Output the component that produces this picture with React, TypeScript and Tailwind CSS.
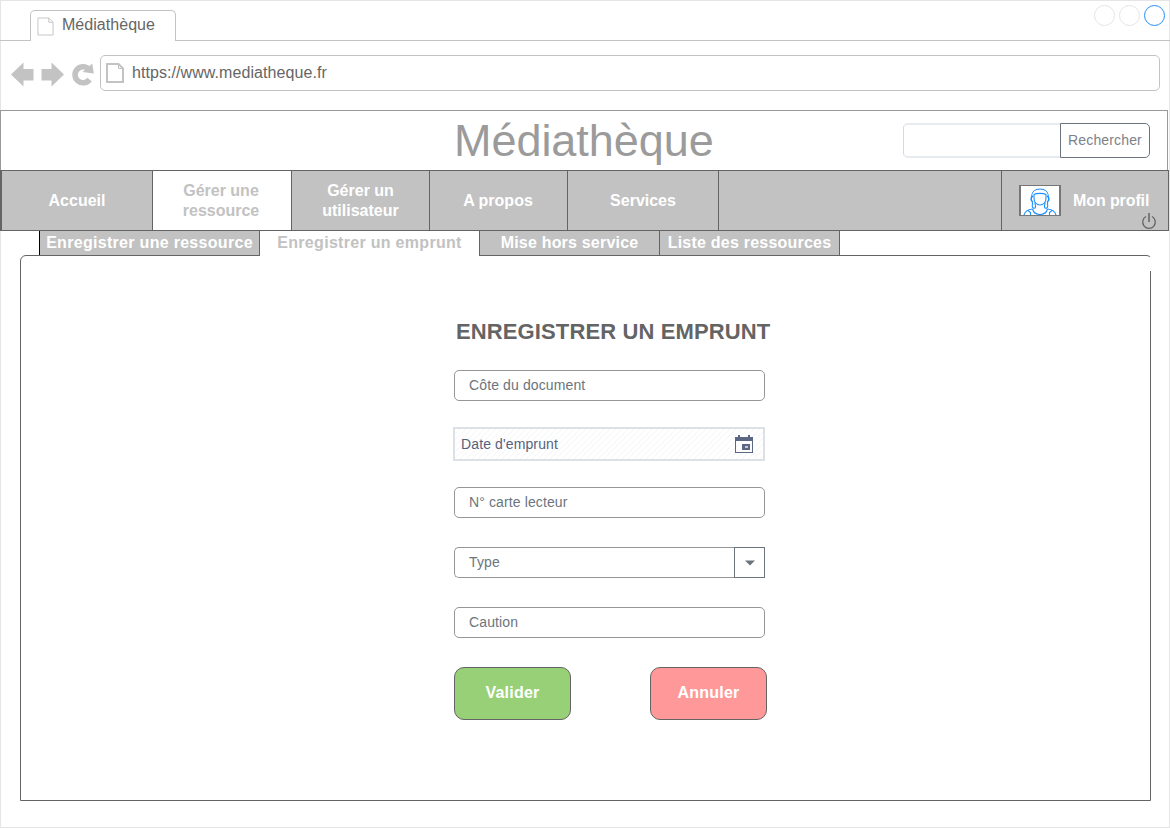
import React from "react";

const NAV = [
  { label: "Accueil", box: "w-[151px]", active: false },
  { label: "Gérer une ressource", box: "w-[139px] pl-[18px] pr-5", active: true },
  { label: "Gérer un utilisateur", box: "w-[138px] pl-5 pr-5", active: false },
  { label: "A propos", box: "w-[138px] pr-px", active: false },
  { label: "Services", box: "w-[151px]", active: false },
];

function DocIcon({ className, weight }: { className: string; weight: number }) {
  return (
    <svg viewBox="0 0 18 20" className={className} fill="none" stroke="#c3c3c3" strokeWidth={weight}>
      <path d="M1 1H12.5L17 5.5V19H1Z" />
      <path d="M12.5 1V5.5H17" strokeWidth="1" />
    </svg>
  );
}

function Avatar() {
  return (
    <svg viewBox="0 0 38 28" className="h-[28px] w-[38px]" fill="none" stroke="#1e90ff" strokeWidth="1.1">
      <path d="M10.500 10C10.500 5 14 2 19 2S27.500 5 27.500 10" />
      <path d="M13 11V7.500C15.500 6 22.500 6 25 7.500V11C25 15 22.500 18 19 18S13 15 13 11Z" />
      <path d="M12 9C9.500 10 9.500 14 12 15M26 9C28.500 10 28.500 14 26 15" strokeWidth="1.6" />
      <path d="M11 15C12.500 16.500 10.500 18 11.500 20C12 21.500 14 22 14.500 20C15 18 13.500 17 14 15.500M27 15C25.500 16.500 27.500 18 26.500 20C26 21.500 24 22 23.500 20C23 18 24.500 17 24 15.500" />
      <path d="M11.500 22C7 22.500 4 24 3 28M26.500 22C31 22.500 34 24 35 28" />
      <path d="M11.500 22C12.500 25.500 15.500 27.500 19 27.500S25.500 25.500 26.500 22M7 23.500L9.500 25.500V28M31 23.500L28.500 25.500V28" />
    </svg>
  );
}

function Field({ label, className }: { label: string; className: string }) {
  return (
    <div className={`ml-px flex h-[31px] w-[311px] items-center rounded-[5px] border border-[#969696] pb-[2px] pl-[14px] ${className}`}>
      <span className="text-[14px] leading-none tracking-[0.12px] text-[#6c757d]">{label}</span>
    </div>
  );
}

export default function App() {
  return (
    <div className="relative h-[828px] w-[1170px] overflow-hidden bg-white font-['Liberation_Sans',Arial,sans-serif]">
      <div className="pointer-events-none absolute inset-0 border border-[#e5e5e5]" />
      <div className="relative flex h-full flex-col">
        <div className="flex h-[41px] items-end">
          <div className="h-px w-[30px] bg-[#c3c3c3]" />
          <div className="flex h-[31px] w-[146px] items-start rounded-t-[5px] border border-b-0 border-[#c3c3c3] pl-[6px] pt-[6px]">
            <DocIcon className="h-[19px] w-[17px]" weight={1} />
            <span className="ml-[8px] text-[16px] leading-[16px] tracking-[0.04px] text-[#666]">Médiathèque</span>
          </div>
          <div className="flex h-full flex-1 justify-end gap-1 border-b border-[#c3c3c3] pr-[5px] pt-[5px]">
            <div className="size-[21px] rounded-full border border-[#e5e5e5]" />
            <div className="size-[21px] rounded-full border border-[#e5e5e5]" />
            <div className="size-[21px] rounded-full border border-[#1e90ff]" />
          </div>
        </div>

        <div className="flex h-[69px] pl-[10px] pr-[10px] pt-[14px]">
          <svg viewBox="0 0 90 36" className="h-9 w-[90px]" fill="#c3c3c3">
            <path d="M1 19.500L13.500 7.500V14H23.500V25.500H13.500V31.500Z" />
            <path d="M54 19.500L41.500 7.500V14H31.500V25.500H41.500V31.500Z" />
            <path d="M79 14.500A8 8 0 1 0 79.500 24.500" fill="none" stroke="#c3c3c3" strokeWidth="5.6" />
            <path d="M82.300 8.500L83.800 18.500L72.500 17Z" />
          </svg>
          <div className="flex h-9 flex-1 items-center rounded-[5px] border border-[#c3c3c3] pl-[5px]">
            <DocIcon className="h-[20px] w-[18px]" weight={2} />
            <span className="ml-[8px] text-[16px] leading-none tracking-[0.07px] text-[#666]">https://www.mediatheque.fr</span>
          </div>
        </div>

        <header className="relative flex h-[60px] w-[1168px] items-center justify-between border border-b-0 border-[#999] pl-[453px] pr-[17px]">
          <h1 className="text-[45px] leading-none tracking-[-0.05px] text-[#9b9b9b]">Médiathèque</h1>
          <div className="mt-[-1px] flex h-[35px] w-[247px]">
            <div className="h-full w-[157px] rounded-l-[5px] border-y-2 border-l border-y-[#e6ebf0] border-l-[#d5dadf]" />
            <div className="flex h-full w-[90px] items-center justify-center rounded-r-[5px] border border-[#6c757d] pt-px text-[14px] tracking-[0.15px] text-[#7b828a]">
              Rechercher
            </div>
          </div>
        </header>

        <nav className="flex h-[61px] w-[1169px] border border-l-2 border-[#646464] bg-[#c2c2c2] text-center text-[16px] font-bold leading-[20px]">
          {NAV.map((n) => (
            <div
              key={n.label}
              className={`flex items-center justify-center border-r border-[#646464] ${n.box} ${n.active ? "bg-white text-[#c2c2c2]" : "text-white"}`}
            >
              {n.label}
            </div>
          ))}
          <div className="flex-1 border-r border-[#646464]" />
          <div className="relative flex w-[166px] items-center pl-[17px] text-white">
            <div className="w-[42px] border-y border-x-2 border-[#777] bg-white pt-px">
              <Avatar />
            </div>
            <span className="ml-[12px] whitespace-nowrap tracking-[-0.1px]">Mon profil</span>
            <svg viewBox="0 0 16 18" className="absolute bottom-0 right-[11px] h-[18px] w-4" fill="none" stroke="#646464" strokeWidth="1.3">
              <path d="M5 4.500A6.300 6.300 0 1 0 11 4.500" />
              <path d="M8 1V10" strokeWidth="2" stroke="#7a7a7a" />
            </svg>
          </div>
        </nav>

        <div className="relative z-10 ml-[39px] flex h-6 text-center text-[16px] font-bold leading-[23px] tracking-[0.3px] text-white">
          <div className="w-[221px] border-l border-r border-l-black border-r-[#646464] bg-[#c2c2c2]">Enregistrer une ressource</div>
          <div className="h-[25px] w-[219px] bg-white text-[#c2c2c2]">Enregistrer un emprunt</div>
          <div className="w-[181px] border-x border-[#646464] bg-[#c2c2c2] tracking-[0.2px]">Mise hors service</div>
          <div className="w-[180px] border-r border-[#646464] bg-[#c2c2c2] tracking-[0.22px]">Liste des ressources</div>
        </div>

        <main className="relative ml-[20px] h-[546px] w-[1131px] rounded-tl-[6px] rounded-tr-[4px] border border-[#646464] pl-[432px] pt-[63px]">
          <div className="absolute -right-px top-px h-[14px] w-[2px] bg-white" />
          <h2 className="ml-[3px] whitespace-nowrap text-[22px] font-bold leading-[26px] tracking-[0.12px] text-[#646464]">ENREGISTRER UN EMPRUNT</h2>
          <Field label="Côte du document" className="mt-[25px]" />
          <div className="mt-[26px] flex h-[34px] w-[312px] items-center justify-between border-2 border-[#dde1e6] bg-[repeating-linear-gradient(135deg,#ffffff_0px,#ffffff_3px,#f3f5f6_3px,#f3f5f6_4.24px)] pl-[6px] pr-[9px]">
            <span className="text-[14px] leading-none tracking-[0.12px] text-[#56627d]">Date d'emprunt</span>
            <svg viewBox="0 0 19 19" className="mt-px h-[19px] w-[19px]" fill="#5c6783" shapeRendering="crispEdges">
              <path fillRule="evenodd" d="M0 2H3V0H5V2H13V0H15V2H18V18H0ZM1 6V17H17V6Z" />
              <path d="M7 9H15V15H7Z" />
              <path d="M10 11H13V13H10Z" fill="#c3c8d2" />
            </svg>
          </div>
          <Field label="N° carte lecteur" className="mt-[26px]" />
          <div className="ml-px mt-[29px] flex h-[31px] w-[311px]">
            <div className="flex flex-1 items-center rounded-l-[5px] border border-r-0 border-[#969696] pb-[2px] pl-[14px] text-[14px] leading-none tracking-[0.12px] text-[#6c757d]">Type</div>
            <div className="flex w-[31px] items-center justify-center border border-[#6c757d]">
              <svg viewBox="0 0 10 6" className="h-[6px] w-[10px]" fill="#6c757d"><path d="M0 0.500H10L5 5.500Z" /></svg>
            </div>
          </div>
          <Field label="Caution" className="mt-[29px]" />
          <div className="mt-[29px] flex w-[314px] justify-between text-[16px] font-bold tracking-[0.22px] text-white">
            <button className="ml-px h-[53px] w-[117px] rounded-[10px] border border-[#646464] bg-[#97d077] pb-px">Valider</button>
            <button className="h-[53px] w-[117px] rounded-[10px] border border-[#646464] bg-[#ff9999] pb-px">Annuler</button>
          </div>
        </main>
      </div>
    </div>
  );
}
